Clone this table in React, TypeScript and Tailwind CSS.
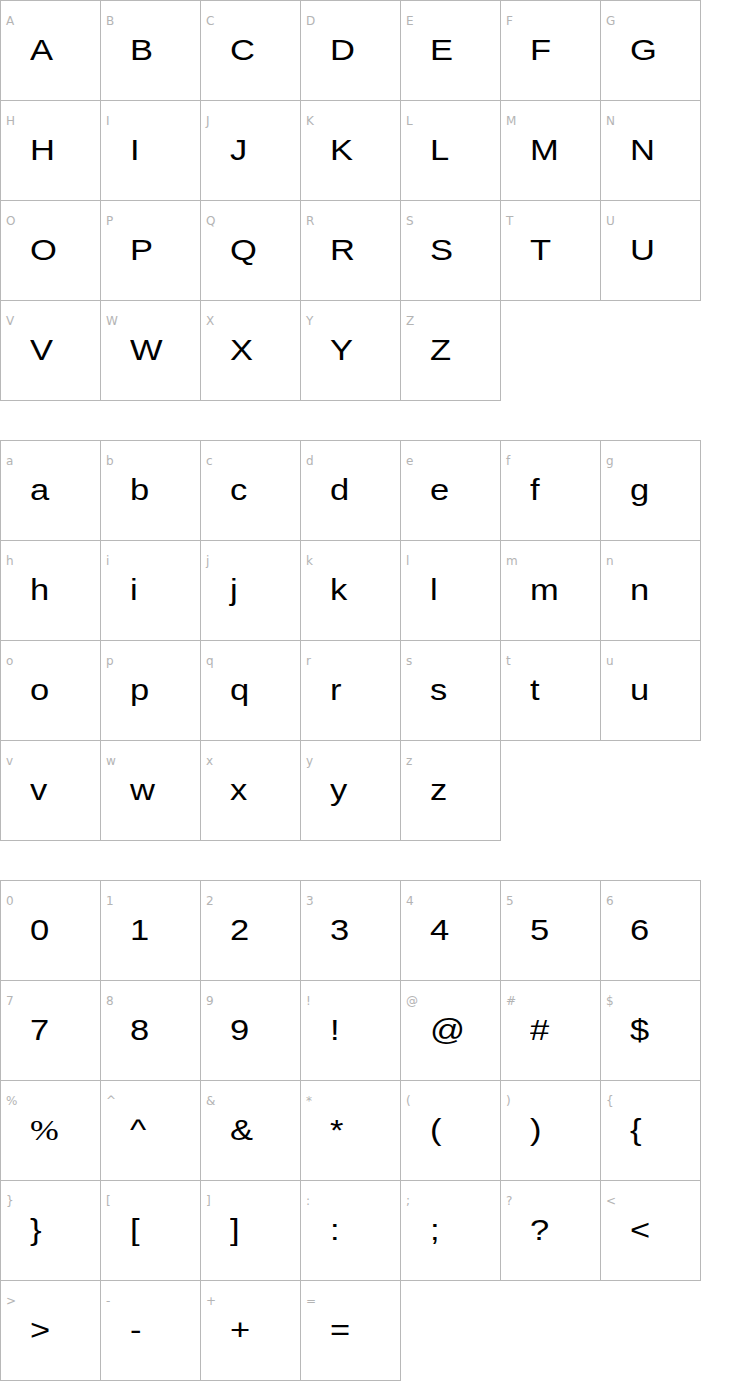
const upper = "ABCDEFGHIJKLMNOPQRSTUVWXYZ".split("");
const lower = "abcdefghijklmnopqrstuvwxyz".split("");
const symbols = "0123456789!@#$%^&*(){}[]:;?<>-+=".split("");

function Cell({ ch }: { ch: string }) {
  return (
    <div className="h-[100px] w-[100px] border-r border-b border-[#b8b8b8] pl-[5px] pt-[14px]">
      <div className="font-['DejaVu_Sans',sans-serif] text-[12px] leading-none text-[#b4b4b4]">
        {ch}
      </div>
      <div
        className={`ml-[24px] mt-[8px] origin-left scale-x-[1.15] text-[30px] leading-none text-black ${
          ch === "%" ? "font-['Liberation_Serif',serif]" : "font-['Liberation_Sans',sans-serif]"
        }`}
      >
        {ch}
      </div>
    </div>
  );
}

function Grid({ chars }: { chars: string[] }) {
  return (
    <div className="grid w-fit grid-cols-[repeat(7,100px)] border-l border-t border-[#b8b8b8]">
      {chars.map((ch, i) => (
        <Cell key={i} ch={ch} />
      ))}
    </div>
  );
}

export default function App() {
  return (
    <div className="flex min-h-[1400px] flex-col gap-[39px] bg-white">
      <Grid chars={upper} />
      <Grid chars={lower} />
      <Grid chars={symbols} />
    </div>
  );
}
